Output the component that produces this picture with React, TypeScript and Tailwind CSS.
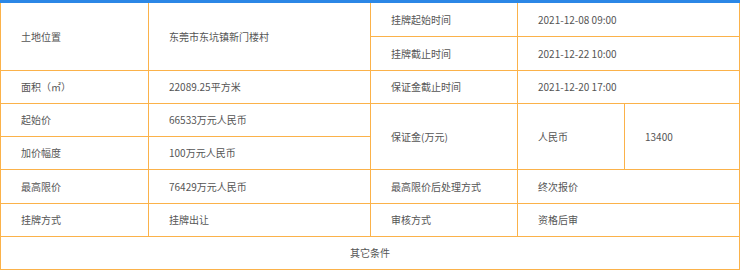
const cell = "border border-[#fbb24a] pl-5 text-left align-middle";

export default function App() {
  return (
    <div className="w-[740px] h-[270px] bg-white font-['Noto_Sans_CJK_SC',sans-serif] text-[10px] text-[#555]">
      <div className="h-[3px] bg-[#2b87e6]" />
      <table className="w-[739px] table-fixed border-collapse">
        <colgroup>
          <col className="w-[148px]" />
          <col className="w-[222px]" />
          <col className="w-[147px]" />
          <col className="w-[107px]" />
          <col className="w-[115px]" />
        </colgroup>
        <tbody>
          <tr className="h-[33px]">
            <td rowSpan={2} className={`${cell} border-t-0`}>土地位置</td>
            <td rowSpan={2} className={`${cell} border-t-0`}>东莞市东坑镇新门楼村</td>
            <td className={`${cell} border-t-0`}>挂牌起始时间</td>
            <td colSpan={2} className={`${cell} border-t-0`}>2021-12-08 09:00</td>
          </tr>
          <tr className="h-[34px]">
            <td className={cell}>挂牌截止时间</td>
            <td colSpan={2} className={cell}>2021-12-22 10:00</td>
          </tr>
          <tr className="h-[33px]">
            <td className={cell}>面积（㎡）</td>
            <td className={cell}>22089.25平方米</td>
            <td className={cell}>保证金截止时间</td>
            <td colSpan={2} className={cell}>2021-12-20 17:00</td>
          </tr>
          <tr className="h-[33px]">
            <td className={cell}>起始价</td>
            <td className={cell}>66533万元人民币</td>
            <td rowSpan={2} className={cell}>保证金(万元)</td>
            <td rowSpan={2} className={cell}>人民币</td>
            <td rowSpan={2} className={cell}>13400</td>
          </tr>
          <tr className="h-[33px]">
            <td className={cell}>加价幅度</td>
            <td className={cell}>100万元人民币</td>
          </tr>
          <tr className="h-[34px]">
            <td className={cell}>最高限价</td>
            <td className={cell}>76429万元人民币</td>
            <td className={cell}>最高限价后处理方式</td>
            <td colSpan={2} className={cell}>终次报价</td>
          </tr>
          <tr className="h-[33px]">
            <td className={cell}>挂牌方式</td>
            <td className={cell}>挂牌出让</td>
            <td className={cell}>审核方式</td>
            <td colSpan={2} className={cell}>资格后审</td>
          </tr>
          <tr className="h-[33px]">
            <td colSpan={5} className="border border-[#fbb24a] text-center align-middle">其它条件</td>
          </tr>
        </tbody>
      </table>
    </div>
  );
}
